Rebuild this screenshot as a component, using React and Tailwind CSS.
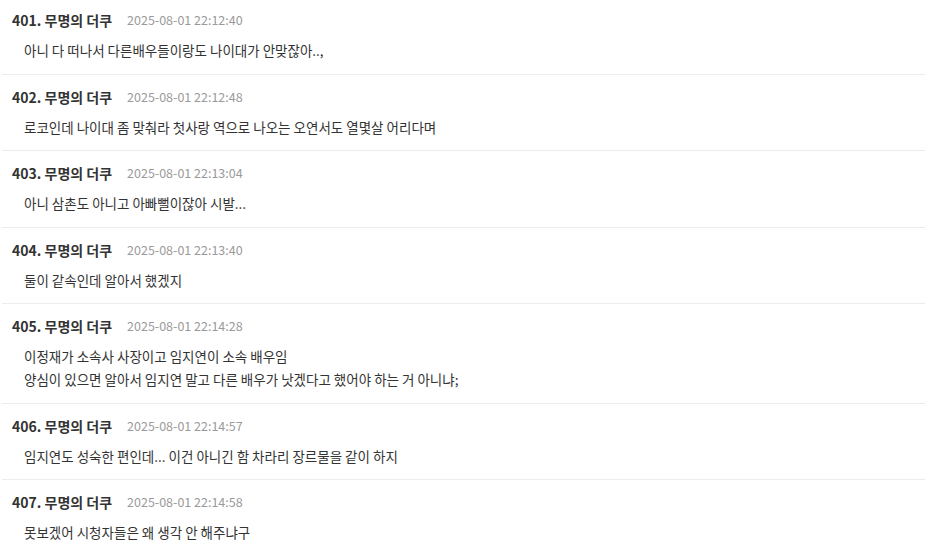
const comments = [
  { no: 401, date: "2025-08-01 22:12:40", lines: ["아니 다 떠나서 다른배우들이랑도 나이대가 안맞잖아..,"] },
  { no: 402, date: "2025-08-01 22:12:48", lines: ["로코인데 나이대 좀 맞춰라 첫사랑 역으로 나오는 오연서도 열몇살 어리다며"] },
  { no: 403, date: "2025-08-01 22:13:04", lines: ["아니 삼촌도 아니고 아빠뻘이잖아 시발..."] },
  { no: 404, date: "2025-08-01 22:13:40", lines: ["둘이 같속인데 알아서 했겠지"] },
  {
    no: 405,
    date: "2025-08-01 22:14:28",
    lines: [
      "이정재가 소속사 사장이고 임지연이 소속 배우임",
      "양심이 있으면 알아서 임지연 말고 다른 배우가 낫겠다고 했어야 하는 거 아니냐;",
    ],
  },
  { no: 406, date: "2025-08-01 22:14:57", lines: ["임지연도 성숙한 편인데... 이건 아니긴 함 차라리 장르물을 같이 하지"] },
  { no: 407, date: "2025-08-01 22:14:58", lines: ["못보겠어 시청자들은 왜 생각 안 해주냐구"] },
];

export default function App() {
  return (
    <div
      className="w-[925px] h-[556px] overflow-hidden bg-white"
      style={{ fontFamily: '"Noto Sans CJK KR", "Noto Sans", sans-serif' }}
    >
      <div className="-mt-[2px] pl-[2px]">
        {comments.map((c) => (
          <div key={c.no} className="border-b border-[#ececec] pt-3 pb-[11.5px] pl-[10px]">
            <div className="flex items-center h-5 leading-5">
              <span className="text-[14px] font-bold text-[#333]">
                {c.no}. 무명의 더쿠
              </span>
              <span className="ml-[15px] text-[12.5px] text-[#9a9a9a]">{c.date}</span>
            </div>
            <div className="mt-[9px] pl-3 text-[13.5px] leading-[23px] text-[#333]">
              {c.lines.map((l, i) => (
                <div key={i}>{l}</div>
              ))}
            </div>
          </div>
        ))}
      </div>
    </div>
  );
}
